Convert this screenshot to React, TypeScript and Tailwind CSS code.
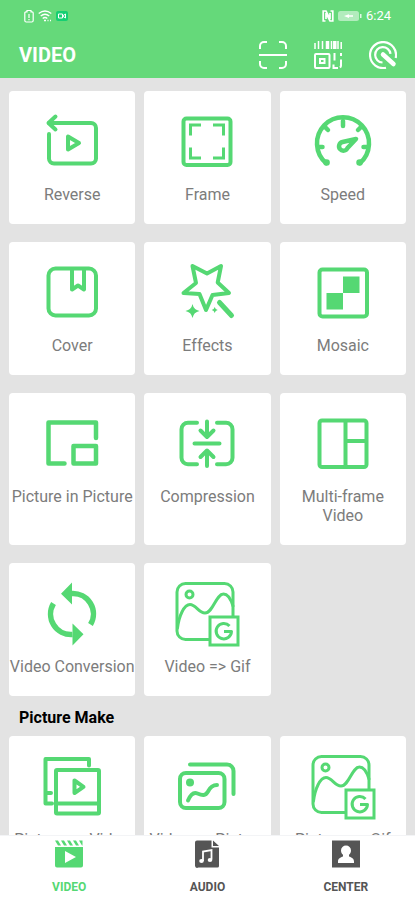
import type { ReactNode } from "react";

const FONT = "font-[Roboto,'Liberation_Sans',sans-serif]";

function ToolIcon({ children, width = 4 }: { children: ReactNode; width?: number }) {
  return (
    <svg
      viewBox="0 0 64 64"
      className="h-16 w-16 overflow-visible text-[#55d873]"
      fill="none"
      stroke="currentColor"
      strokeWidth={width}
      strokeLinecap="round"
      strokeLinejoin="round"
      aria-hidden="true"
    >
      {children}
    </svg>
  );
}

const ReverseIcon = () => (
  <ToolIcon>
    <path d="M9 23v24.5a5 5 0 0 0 5 5h37a5 5 0 0 0 5-5V17a5 5 0 0 0-5-5H9" />
    <path d="M15.5 5.5 8.5 12l7 6.5" />
    <path d="M28 25.5v13l11-6.500z" />
  </ToolIcon>
);

const FrameIcon = () => (
  <ToolIcon>
    <rect x="8.5" y="7.5" width="47" height="46.5" rx="3" />
    <path
      strokeWidth="3"
      strokeLinecap="butt"
      strokeLinejoin="miter"
      d="M26 14H15.5v10.5M38 14h10.5v10.5M26 47H15.5V36.500M38 47h10.5V36.500"
    />
  </ToolIcon>
);

const SpeedIcon = () => (
  <ToolIcon>
    <path strokeWidth="4.5" d="M15 52A26 26 0 1 1 49 52" />
    <path strokeWidth="6.5" d="M15.5 51.500h.1M48.500 51.500h.1" />
    <path strokeWidth="4.5" d="M32 10v5M8 36h3.5M52.500 36H56M14 16l3 3M50 16l-3 3" />
    <path strokeWidth="4.5" d="M45 28 31.500 31A4.400 4.400 0 1 0 36.500 37z" />
  </ToolIcon>
);

const CoverIcon = () => (
  <ToolIcon>
    <rect x="8.5" y="6.5" width="47.5" height="47" rx="7" />
    <path d="M32 7v20.5l6-4 6 4V7" />
  </ToolIcon>
);

const EffectsIcon = () => (
  <ToolIcon>
    <path d="M17.500 4 32 11.500 46 4l-3.300 16.500L54 31l-16.500 2-6.500 15-6.500-16L8.500 31 21 21z" />
    <path strokeWidth="5" d="m44.500 40.500 12 13" />
    <path
      stroke="none"
      fill="currentColor"
      d="M17.500 42q1.200 5.800 7 7-5.800 1.200-7 7-1.200-5.800-7-7 5.800-1.200 7-7zM39.700 45q.6 2.400 3 3-2.400.6-3 3-.6-2.400-3-3 2.400-.6 3-3z"
    />
  </ToolIcon>
);

const MosaicIcon = () => (
  <ToolIcon>
    <rect x="8.5" y="7.5" width="47.5" height="47" rx="3" />
    <path stroke="none" fill="currentColor" d="M32 14.500h16.500V31H32zM15.500 31H32v16.500H15.500z" />
  </ToolIcon>
);

const PipIcon = () => (
  <ToolIcon width={4.5}>
    <path d="M24.500 50.500H8.500V9.500H56v15.500" />
    <rect x="33.5" y="33" width="22.5" height="17.5" />
  </ToolIcon>
);

const CompressionIcon = () => (
  <ToolIcon>
    <path d="M22 9.700h-9a6.500 6.500 0 0 0-6.500 6.500v28.600a6.500 6.500 0 0 0 6.500 6.500h9M42 9.700h9a6.500 6.500 0 0 1 6.500 6.500v28.600a6.500 6.500 0 0 1-6.500 6.500h-9" />
    <path d="M19.500 30.500h25M32 8.500V24M25.500 17.500 32 24l6.500-6.500M32 53V37.500M25.500 44l6.500-6.500 6.500 6.500" />
  </ToolIcon>
);

const MultiFrameIcon = () => (
  <ToolIcon>
    <rect x="8.5" y="7.5" width="47" height="46.5" rx="2.5" />
    <path d="M34.500 8v46M35 28h20" />
  </ToolIcon>
);

const ConversionIcon = () => (
  <ToolIcon width={5.5}>
    <path
      strokeLinecap="butt"
      d="M31.500 10.500A20.500 20.500 0 0 1 50.500 41.500M32.500 51.500A20.500 20.500 0 0 1 13.500 20.500"
    />
    <path stroke="none" fill="currentColor" d="M21 10.700 32-.5v22zM43.500 51.300l-11 11.200v-22z" />
  </ToolIcon>
);

const GifIcon = () => (
  <ToolIcon width={3}>
    <path d="M33.500 56.500H10.500a8.500 8.500 0 0 1-8.500-8.500V9A8.500 8.500 0 0 1 10.500.5h39A8.500 8.500 0 0 1 58 9v24" />
    <circle cx="14.5" cy="11.500" r="3.500" />
    <path d="M2.500 45C4 33 9 21.500 15 21.500c6 0 8.500 8.500 15 8.500 8 0 11-19 18.500-19 4 0 7.500 5.500 9.500 12" />
    <rect x="35" y="34" width="28" height="28" strokeLinejoin="miter" />
    <path strokeLinecap="butt" d="M54.500 43A7.700 7.700 0 1 0 56.500 48.500H49" />
  </ToolIcon>
);

const PictureVideoIcon = () => (
  <ToolIcon width={4}>
    <path d="M12 47.500H5.500V3H49v6.500M6 37h5" />
    <rect x="16" y="14" width="43" height="43.5" rx="1" />
    <path d="M16 47.500h43M34.500 24.500v12.500l9-6.200z" />
  </ToolIcon>
);

const VideoPictureIcon = () => (
  <ToolIcon width={4}>
    <rect x="5" y="17" width="44.5" height="35" rx="6" />
    <path d="M15 8.500H52a6.500 6.500 0 0 1 6.500 6.500v23" />
    <circle cx="15" cy="26.500" r="4" stroke="none" fill="currentColor" />
    <path d="M13 44.500c3-7 6-8.500 9.500-7 5 2.200 8 2.500 10.500-2 2-4 4-6.500 9-6.500" />
  </ToolIcon>
);

type Tool = { label: string; icon: () => ReactNode };

const videoTools: Tool[] = [
  { label: "Reverse", icon: ReverseIcon },
  { label: "Frame", icon: FrameIcon },
  { label: "Speed", icon: SpeedIcon },
  { label: "Cover", icon: CoverIcon },
  { label: "Effects", icon: EffectsIcon },
  { label: "Mosaic", icon: MosaicIcon },
  { label: "Picture in Picture", icon: PipIcon },
  { label: "Compression", icon: CompressionIcon },
  { label: "Multi-frame Video", icon: MultiFrameIcon },
  { label: "Video Conversion", icon: ConversionIcon },
  { label: "Video => Gif", icon: GifIcon },
];

const pictureTools: Tool[] = [
  { label: "Picture => Video", icon: PictureVideoIcon },
  { label: "Video => Picture", icon: VideoPictureIcon },
  { label: "Picture => Gif", icon: GifIcon },
];

function ToolGrid({ tools }: { tools: Tool[] }) {
  return (
    <div className="grid grid-cols-3 gap-x-[9px] gap-y-[18px]">
      {tools.map(({ label, icon: Icon }) => (
        <button
          key={label}
          type="button"
          className="flex flex-col items-center justify-start rounded bg-white pt-5 pb-5"
        >
          <Icon />
          <span className="mt-2.5 text-center text-base leading-[19px] text-[#7c7c7c]">{label}</span>
        </button>
      ))}
    </div>
  );
}

function StatusBar() {
  return (
    <div className="flex h-8 items-center justify-between px-6 text-white">
      <div className="flex items-center gap-1">
        <svg viewBox="0 0 10 14" className="h-3.5 w-2.5" fill="none" stroke="currentColor" strokeWidth="1.2">
          <path d="M3 1.500h4v1.300h1a1.200 1.200 0 0 1 1.200 1.200v7.500A1.500 1.500 0 0 1 7.700 13H2.300A1.500 1.500 0 0 1 .8 11.500V4A1.200 1.200 0 0 1 2 2.800h1zM5 5v4M5 10v1.200" />
        </svg>
        <svg viewBox="0 0 14 14" className="h-3.5 w-3.5" fill="none" stroke="currentColor" strokeWidth="1.3">
          <path d="M.7 4.500q6.300-5 12.600 0M2.700 7q4.300-3.500 8.600 0M4.700 9.500q2.300-2 4.600 0M6 11.500h2M9.500 11.500h1M12 11.500h1" />
        </svg>
        <svg viewBox="0 0 12 10" className="h-2.5 w-3">
          <rect width="12" height="10" rx="2" fill="#16cf72" />
          <path d="M2.500 3h4v4h-4zM6.500 5l3-2v4z" fill="none" stroke="currentColor" strokeLinejoin="round" />
        </svg>
      </div>
      <div className="flex items-center gap-1">
        <svg viewBox="0 0 12 12" className="h-3 w-3">
          <path
            fill="none"
            stroke="currentColor"
            strokeWidth="1.7"
            d="M3.500 11H1.200V1H4l4 8V3M8.500 1h2.300v10H8L4 3v6"
          />
        </svg>
        <svg viewBox="0 0 24 10" className="h-2.5 w-6">
          <rect width="21" height="10" rx="2.5" fill="currentColor" opacity=".5" />
          <path d="M22 3h1.500v4H22z" fill="currentColor" opacity=".8" />
          <path d="M6 5l5-1.800v1h4v1.600h-4V7z" fill="currentColor" />
        </svg>
        <span className="text-[13px] leading-4">6:24</span>
      </div>
    </div>
  );
}

function Header() {
  return (
    <header className="shrink-0 bg-[#65d97a] text-white">
      <StatusBar />
      <div className="flex h-[46px] items-center justify-between pr-[18px] pl-[19px]">
        <h1 className="text-xl leading-6 font-bold">VIDEO</h1>
        <div className="flex items-center gap-[27px]">
          <button type="button" aria-label="Scan">
            <svg viewBox="0 0 28 28" className="h-7 w-7" fill="none" stroke="currentColor" strokeWidth="2">
              <path d="M1 8V5a4 4 0 0 1 4-4h3M20 1h3a4 4 0 0 1 4 4v3M27 20v3a4 4 0 0 1-4 4h-3M8 27H5a4 4 0 0 1-4-4v-3M0 14h28" />
            </svg>
          </button>
          <button type="button" aria-label="Code">
            <svg viewBox="0 0 28 28" className="h-7 w-7" fill="none" stroke="currentColor" strokeWidth="2">
              <path strokeWidth="1.5" d="M1 2v6M4.500 0v8M8.500 0v8M17.500 0v8M24 0v8M27.200 1v7" />
              <path strokeWidth="3.5" d="M13.500 0v8M20.800 0v8" />
              <rect x="1" y="13" width="14.5" height="14" rx="1" />
              <rect x="6" y="18" width="4.5" height="4" />
              <path d="M20.500 12v7.500M27 12v3M27 18.500V24a3 3 0 0 1-1 2.500M19.500 23.500v3.500H24" />
            </svg>
          </button>
          <button type="button" aria-label="Tap target">
            <svg viewBox="0 0 28 28" className="h-7 w-7" fill="none" stroke="currentColor" strokeWidth="2.2">
              <path d="M17 26.700A13 13 0 1 1 26.700 17" />
              <path d="M13.500 21.500A7.700 7.700 0 1 1 21.500 12.800" />
              <path d="M14 13.500l10.500 9.500" strokeWidth="4.5" strokeLinecap="round" />
            </svg>
          </button>
        </div>
      </div>
    </header>
  );
}

function TabBar() {
  const tab = "flex flex-1 flex-col items-center gap-[11px] pt-1 text-xs leading-4 font-bold";

  return (
    <nav className="flex shrink-0 border-t border-gray-100 bg-white pb-[5px]">
      <button type="button" aria-current="page" className={`${tab} text-[#55d873]`}>
        <svg viewBox="0 0 28 28" className="h-7 w-7" fill="currentColor" aria-hidden="true">
          <path d="M0 .5h3l3 5H3zM6 .5h3l3 5H9zM12 .5h3l3 5h-3zM18 .5h3l3 5h-3zM24 .5h3.500V5.500H27z" />
          <path fillRule="evenodd" d="M0 7h28v18.500a2 2 0 0 1-2 2H2a2 2 0 0 1-2-2zM10 11v12l11-6z" />
        </svg>
        <span>VIDEO</span>
      </button>
      <button type="button" className={`${tab} text-[#555555]`}>
        <svg viewBox="0 0 28 28" className="h-7 w-7" fill="currentColor" aria-hidden="true">
          <path d="M4 .5h14.500v7H26V26a1.500 1.500 0 0 1-1.500 1.500h-19A2.500 2.500 0 0 1 2 26V2.500a2 2 0 0 1 2-2zM20 .5l6 5.500h-6z" />
          <path d="M10 21V11.500l8.500-1.500v9.500" fill="none" stroke="white" strokeWidth="1.8" />
          <ellipse cx="8.5" cy="21" rx="2.3" ry="2" fill="white" />
          <ellipse cx="17" cy="20" rx="2.3" ry="2" fill="white" />
        </svg>
        <span>AUDIO</span>
      </button>
      <button type="button" className={`${tab} text-[#555555]`}>
        <svg viewBox="0 0 28 28" className="h-7 w-7" fill="currentColor" aria-hidden="true">
          <path d="M0 .5h28v27H0z" />
          <path
            fill="white"
            d="M14 5.500a5 5 0 0 1 5 5c0 1.800-.8 3.400-2 4.300v1.700c2.500.8 5 2 5 5V23H6v-1.500c0-3 2.500-4.200 5-5v-1.700c-1.200-.9-2-2.500-2-4.300a5 5 0 0 1 5-5z"
          />
        </svg>
        <span>CENTER</span>
      </button>
    </nav>
  );
}

export default function App() {
  return (
    <div className={`flex h-screen flex-col bg-[#e3e3e3] ${FONT}`}>
      <Header />
      <main className="min-h-0 flex-1 overflow-y-auto px-[9px] pt-[13px] pb-4 [scrollbar-width:none]">
        <ToolGrid tools={videoTools} />
        <h2 className="px-2.5 pt-3 pb-2 text-base leading-5 font-bold text-black">Picture Make</h2>
        <ToolGrid tools={pictureTools} />
      </main>
      <TabBar />
    </div>
  );
}
